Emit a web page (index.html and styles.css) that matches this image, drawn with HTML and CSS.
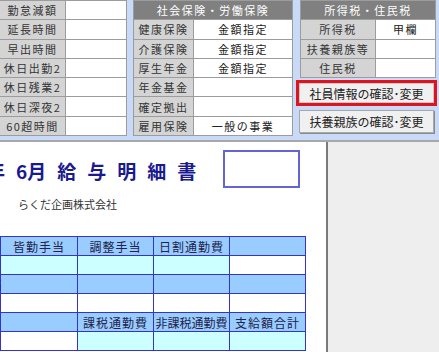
FILE: index.html
```html
<!DOCTYPE html>
<html lang="ja">
<head>
  <meta charset="UTF-8">
  <title>給与明細書</title>
  <link rel="stylesheet" href="styles.css">
</head>
<body>
  <div class="top">
    <div class="grid g1">
      <div class="lbl">勤怠減額</div><div class="val"></div>
      <div class="lbl">延長時間</div><div class="val"></div>
      <div class="lbl">早出時間</div><div class="val"></div>
      <div class="lbl">休日出勤2</div><div class="val"></div>
      <div class="lbl">休日残業2</div><div class="val"></div>
      <div class="lbl">休日深夜2</div><div class="val"></div>
      <div class="lbl">60超時間</div><div class="val"></div>
    </div>

    <div class="grid g2">
      <div class="hd">社会保険・労働保険</div>
      <div class="lbl">健康保険</div><div class="val">金額指定</div>
      <div class="lbl">介護保険</div><div class="val">金額指定</div>
      <div class="lbl">厚生年金</div><div class="val">金額指定</div>
      <div class="lbl">年金基金</div><div class="val"></div>
      <div class="lbl">確定拠出</div><div class="val"></div>
      <div class="lbl">雇用保険</div><div class="val">一般の事業</div>
    </div>

    <div class="col3">
      <div class="grid g3">
        <div class="hd">所得税・住民税</div>
        <div class="lbl">所得税</div><div class="val">甲欄</div>
        <div class="lbl">扶養親族等</div><div class="val"></div>
        <div class="lbl">住民税</div><div class="val"></div>
      </div>
      <div class="mark"><button class="btn">社員情報の確認･変更</button></div>
      <button class="btn btn-2">扶養親族の確認･変更</button>
    </div>
  </div>

  <div class="main">
    <div class="sheet">
      <div class="head">
        <div class="title">
          <span>年</span><span>6月</span><span>給</span><span>与</span><span>明</span><span>細</span><span>書</span>
        </div>
        <div class="stamp"></div>
      </div>
      <div class="company">らくだ企画株式会社</div>

      <table class="pay">
        <colgroup>
          <col class="w0"><col class="w1"><col><col><col>
        </colgroup>
        <tr class="th">
          <td></td><td>皆勤手当</td><td>調整手当</td><td>日割通勤費</td><td></td>
        </tr>
        <tr>
          <td class="c"></td><td class="c"></td><td class="c"></td><td class="c"></td><td></td>
        </tr>
        <tr class="th">
          <td>休日深夜手当</td><td></td><td></td><td></td><td></td>
        </tr>
        <tr>
          <td></td><td></td><td></td><td></td><td></td>
        </tr>
        <tr class="th">
          <td></td><td></td><td>課税通勤費</td><td class="tight">非課税通勤費</td><td>支給額合計</td>
        </tr>
        <tr>
          <td></td><td></td><td class="c"></td><td class="c"></td><td class="c"></td>
        </tr>
      </table>
    </div>
    <div class="side"></div>
  </div>
</body>
</html>
```

FILE: styles.css
```css
* { box-sizing: border-box; }
html, body { margin: 0; padding: 0; height: 100%; overflow: hidden; }
body { font-family: "Noto Sans CJK JP", "DejaVu Sans", sans-serif; color: #333; background: #fff; }

/* upper settings band */
.top { display: flex; align-items: flex-start; height: 140px; background: #c9daf8; }
.grid { display: grid; gap: 1px; padding: 1px; background: #9c9c9c; font-size: 11px; letter-spacing: 1.5px; }
.grid div { display: flex; align-items: center; justify-content: center; white-space: nowrap; }
.lbl { background: #d4d4d4; color: #333; }
.val { background: #fff; color: #222; }
.hd { grid-column: 1 / 3; background: #808080; color: #fff; }

.g1 { margin-left: -1px; grid-template-columns: 65px 60px; grid-template-rows: repeat(7, 1fr); height: 136px; }
.g2 { margin-left: 6px; grid-template-columns: 59px 98px; grid-template-rows: repeat(7, 1fr); height: 136px; }
.col3 { margin-left: 7px; display: flex; flex-direction: column; }
.g3 { grid-template-columns: 74px 59px; grid-template-rows: repeat(4, 1fr); height: 78px; width: 136px; }

.btn { font-family: inherit; font-size: 12px; color: #222; background: #f0f0f0; border: 1px solid #a8a8a8; padding: 0; cursor: pointer; }
.mark { margin: 2px 0 0 -4px; width: 141px; height: 26px; border: 3px solid #e0141e; display: flex; }
.mark .btn { flex: 1; border-color: #c8c8c8; }
.btn-2 { margin: 4px 0 0 -1px; width: 135px; height: 23px; box-shadow: 1px 1px 0 #8a8a8a; }

/* lower sheet */
.main { display: flex; height: 212px; border-top: 2px solid #a8a8a8; }
.sheet { width: 326px; background: #fff; overflow: hidden; }
.side { flex: 1; background: #eeeeee; border-left: 2px solid #7a7a7a; }

.head { display: flex; align-items: flex-start; padding-top: 8px; }
.title { display: flex; gap: 11px; margin: 7px 0 0 -14px; font-size: 19px; font-weight: bold; color: #1a1a8e; line-height: 28px; }
.stamp { margin-left: auto; margin-right: 26px; width: 77px; height: 38px; border: 2px solid #6464d6; }
.company { margin: 8px 0 0 18px; font-size: 11px; line-height: 16px; color: #333; }

.pay { margin: 24px 0 0 -76px; border-collapse: collapse; table-layout: fixed; width: 381px; font-size: 12px; letter-spacing: 1px; color: #22224a; }
.pay col { width: 76px; }
.pay col.w0 { width: 76px; }
.pay col.w1 { width: 77px; }
.pay td { height: 19px; padding: 0; border: 1px solid #3434c8; text-align: center; white-space: nowrap; background: #fff; }
.pay td.tight { letter-spacing: 0; }
.pay tr.th td { background: #99ccff; }
.pay td.c { background: #ccffff; }
```
